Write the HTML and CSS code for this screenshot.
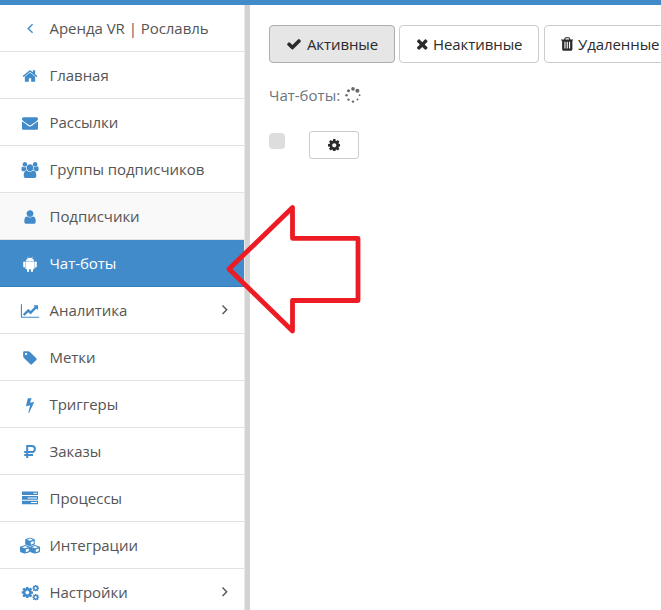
FILE: index.html
```html
<!DOCTYPE html>
<html lang="ru">
<head>
<meta charset="utf-8">
<title>Чат-боты</title>
<link rel="stylesheet" href="styles.css">
</head>
<body>
<svg class="defs" aria-hidden="true">
<symbol id="cog" viewBox="128 128 1536 1536"><path d="M1152 896q0-106-75-181t-181-75-181 75-75 181 75 181 181 75 181-75 75-181zm512-109v222q0 12-8 23t-20 13l-185 28q-19 54-39 91 35 50 107 138 10 12 10 25t-9 23q-27 37-99 108t-94 71q-12 0-26-9l-138-108q-44 23-91 38-16 136-29 186-7 28-36 28h-222q-14 0-24.500-8.500t-11.500-21.500l-28-184q-49-16-90-37l-141 107q-10 9-25 9-14 0-25-11-126-114-165-168-7-10-7-23 0-12 8-23 15-21 51-66.500t54-70.500q-27-50-41-99l-183-27q-13-2-21-12.500t-8-23.500v-222q0-12 8-23t19-13l186-28q14-46 39-92-40-57-107-138-10-12-10-24 0-10 9-23 26-36 98.500-107.500t94.500-71.500q13 0 26 10l138 107q44-23 91-38 16-136 29-186 7-28 36-28h222q14 0 24.500 8.500t11.500 21.500l28 184q49 16 90 37l142-107q9-9 24-9 13 0 25 10 129 119 165 170 7 8 7 22 0 12-8 23-15 21-51 66.500t-54 70.500q26 50 41 98l183 28q13 2 21 12.500t8 23.500z"/></symbol>
<symbol id="cube" viewBox="0 0 10 10" preserveAspectRatio="none"><path fill-rule="evenodd" d="M5 0 9.300 1.700Q10 2 10 2.700V7.300Q10 7.900 9.400 8.200L5 10 .6 8.200Q0 7.900 0 7.300V2.700Q0 2 .7 1.700ZM5 1.200 1.900 2.500 5 3.800 8.100 2.500ZM5.800 5.300V8.300L8.800 7V4.100Z"/></symbol>
</svg>
<div class="topbar"></div>
<div class="layout">
<nav class="sidebar">
<a class="item"><svg class="icon" viewBox="0 0 20 16"><path class="line" d="M12.600 3.200 8.200 7.500l4.400 4.300"/></svg><span>Аренда VR | Рославль</span></a>
<a class="item"><svg class="icon" viewBox="-224 0 2240 1792"><path d="M1472 992v480q0 26-19 45t-45 19h-384v-384h-256v384h-384q-26 0-45-19t-19-45v-480q0-1 .5-3t.5-3l575-474 575 474q1 2 1 6zm223-69l-62 74q-8 9-21 11h-3q-13 0-21-7l-692-577-692 577q-12 8-24 7-13-2-21-11l-62-74q-8-10-7-23.500t11-21.500l719-599q32-26 76-26t76 26l244 204v-195q0-14 9-23t23-9h192q14 0 23 9t9 23v408l219 182q10 8 11 21.500t-7 23.500z"/></svg><span>Главная</span></a>
<a class="item"><svg class="icon" viewBox="-224 0 2240 1792"><path d="M1792 710v794q0 66-47 113t-113 47h-1472q-66 0-113-47t-47-113v-794q44 49 101 87 362 246 497 345 57 42 92.500 65.500t94.500 48 110 24.500h2q51 0 110-24.500t94.500-48 92.500-65.500q170-123 498-345 57-39 100-87zm0-294q0 79-49 151t-122 123q-376 261-468 325-10 7-42.500 31t-54 38.500-52 32.500-57.500 27-50 9h-2q-23 0-50-9t-57.500-27-52-32.500-54-38.500-42.500-31q-91-64-262-182.500t-205-142.500q-62-42-117-115.500t-55-136.500q0-78 41.500-130t118.500-52h1472q65 0 112.500 47t47.500 113z"/></svg><span>Рассылки</span></a>
<a class="item"><svg class="icon" viewBox="-96 0 2240 1792"><path d="M657 896q-162 5-265 128h-134q-82 0-138-40.500t-56-118.500q0-353 124-353 6 0 43.500 21t97.500 42.500 119 21.500q67 0 133-23-5 37-5 66 0 159 90 306zm1071 637q0 120-73 189.500t-194 69.500h-874q-121 0-194-69.500t-73-189.500q0-53 3.500-103.500t14-109 26.500-108.500 43-97.500 62-81 85.500-53.500 111.500-20q10 0 43 21.500t73 48 107 48 135 21.500 135-21.500 107-48 73-48 43-21.500q61 0 111.500 20t85.500 53.500 62 81 43 97.500 26.500 108.500 14 109 3.500 103.500zm-1024-1277q0 106-75 181t-181 75-181-75-75-181 75-181 181-75 181 75 75 181zm704 384q0 159-112.500 271.500t-271.500 112.500-271.500-112.500-112.500-271.500 112.500-271.500 271.500-112.500 271.500 112.500 112.500 271.500zm576 225q0 78-56 118.500t-138 40.500h-134q-103-123-265-128 90-147 90-306 0-29-5-66 66 23 133 23 59 0 119-21.500t97.500-42.500 43.500-21q124 0 124 353zm-128-609q0 106-75 181t-181 75-181-75-75-181 75-181 181-75 181 75 75 181z"/></svg><span>Группы подписчиков</span></a>
<a class="item hover"><svg class="icon" viewBox="-224 0 2240 1792"><path d="M1536 1399q0 109-62.500 187t-150.500 78h-854q-88 0-150.500-78t-62.500-187q0-85 8.500-160.500t31.500-152 58.500-131 94-89 134.500-34.500q131 128 313 128t313-128q76 0 134.500 34.500t94 89 58.500 131 31.500 152 8.500 160.500zm-256-887q0 159-112.500 271.500t-271.500 112.500-271.500-112.500-112.500-271.500 112.500-271.500 271.500-112.500 271.500 112.500 112.500 271.500z"/></svg><span>Подписчики</span></a>
<a class="item active"><svg class="icon" viewBox="0 0 20 16"><path fill-rule="evenodd" d="M5.800 5.500Q6 3.300 8 2.300L7.200.9l.3-.2.900 1.400Q10 1.500 11.600 2.100l.9-1.400.3.200L12 2.300q2 1 2.200 3.200ZM8.100 3.600a.4.400 0 1 0 0 .8.400.4 0 0 0 0-.8Zm3.800 0a.4.400 0 1 0 0 .8.400.4 0 0 0 0-.8Z"/><path d="M5.500 5.800h9v6.400q0 1-1 1h-.5V15a1 1 0 0 1-2.100 0v-1.800H9.100V15a1 1 0 0 1-2.100 0v-1.800h-.5q-1 0-1-1Z"/><rect x="3.200" y="5.500" width="2.100" height="5.900" rx="1"/><rect x="14.700" y="5.500" width="2.100" height="5.900" rx="1"/></svg><span>Чат-боты</span></a>
<a class="item"><svg class="icon" viewBox="-96 0 2240 1792"><path d="M2048 1536v128h-2048v-1536h128v1408h1920zm-128-1248v435q0 21-19.500 29.500t-35.500-7.500l-121-121-633 633q-10 10-23 10t-23-10l-233-233-416 416-192-192 585-585q10-10 23-10t23 10l233 233 464-464-121-121q-16-16-7.500-35.500t29.500-19.500h435q14 0 23 9t9 23z"/></svg><span>Аналитика</span><svg class="chevron" viewBox="0 0 8 12"><path class="line" d="M1.500 1.500 5.700 5.700l-4.200 4.200"/></svg></a>
<a class="item"><svg class="icon" viewBox="-224 0 2240 1792"><path d="M576 448q0-53-37.500-90.500t-90.500-37.500-90.500 37.500-37.500 90.500 37.500 90.500 90.500 37.500 90.500-37.500 37.500-90.500zm1067 576q0 53-37 90l-491 492q-39 37-91 37-53 0-90-37l-715-716q-38-37-64.500-101t-26.500-117v-416q0-52 38-90t90-38h416q53 0 117 26.500t102 64.500l715 714q37 39 37 91z"/></svg><span>Метки</span></a>
<a class="item"><svg class="icon" viewBox="-224 0 2240 1792"><path d="M1333 566q18 20 7 44l-540 1157q-13 25-42 25-4 0-14-2-17-5-25.500-19t-4.500-30l197-808-406 101q-4 1-12 1-18 0-31-11-18-15-13-39l201-825q4-14 16-23t28-9h328q19 0 32 12.500t13 29.500q0 8-5 18l-171 463 396-98q8-2 12-2 19 0 34 15z"/></svg><span>Триггеры</span></a>
<a class="item"><svg class="icon" viewBox="0 0 20 16"><path class="thick" d="M7.200 14V1.900h4.600a3.100 3.100 0 0 1 0 6.200H4.200M4.200 11h8.800"/></svg><span>Заказы</span></a>
<a class="item"><svg class="icon" viewBox="0 0 20 16"><path fill-rule="evenodd" d="M2 .5h16v3.600H2ZM13.500 1.800v1H17v-1ZM2 5.100h16v3.600H2ZM7.700 6.400v1H17v-1ZM2 9.700h16v3.600H2ZM11 11v1h6v-1Z"/></svg><span>Процессы</span></a>
<a class="item"><svg class="icon" viewBox="0 0 20 16"><use href="#cube" x="5.100" y="-.5" width="9.800" height="8.700"/><use href="#cube" x="0" y="7" width="10" height="8.700"/><use href="#cube" x="10" y="7" width="10" height="8.700"/></svg><span>Интеграции</span></a>
<a class="item"><svg class="icon" viewBox="0 0 20 16"><use href="#cog" x="1.500" y="1.700" width="11.600" height="11.600"/><use href="#cog" x="12.300" y="-.2" width="6.800" height="6.800"/><use href="#cog" x="12.300" y="8.800" width="6.800" height="6.800"/></svg><span>Настройки</span><svg class="chevron" viewBox="0 0 8 12"><path class="line" d="M1.500 1.500 5.700 5.700l-4.200 4.200"/></svg></a>
</nav>
<main class="content">
<div class="filters">
<button class="btn pressed"><svg viewBox="0 0 1792 1792"><path d="M1671 566q0 40-28 68l-724 724-136 136q-28 28-68 28t-68-28l-136-136-362-362q-28-28-28-68t28-68l136-136q28-28 68-28t68 28l294 295 656-657q28-28 68-28t68 28l136 136q28 28 28 68z"/></svg><span>Активные</span></button>
<button class="btn inactive"><svg class="narrow" viewBox="192 0 1408 1792"><path d="M1490 1322q0 40-28 68l-136 136q-28 28-68 28t-68-28l-294-294-294 294q-28 28-68 28t-68-28l-136-136q-28-28-28-68t28-68l294-294-294-294q-28-28-28-68t28-68l136-136q28-28 68-28t68 28l294 294 294-294q28-28 68-28t68 28l136 136q28 28 28 68t-28 68l-294 294 294 294q28 28 28 68z"/></svg><span>Неактивные</span></button>
<button class="btn deleted"><svg class="narrow" viewBox="192 0 1408 1792"><path d="M704 1376v-704q0-14-9-23t-23-9h-64q-14 0-23 9t-9 23v704q0 14 9 23t23 9h64q14 0 23-9t9-23zm256 0v-704q0-14-9-23t-23-9h-64q-14 0-23 9t-9 23v704q0 14 9 23t23 9h64q14 0 23-9t9-23zm256 0v-704q0-14-9-23t-23-9h-64q-14 0-23 9t-9 23v704q0 14 9 23t23 9h64q14 0 23-9t9-23zm-544-992h448l-48-117q-7-9-17-11h-317q-10 2-17 11zm928 32v64q0 14-9 23t-23 9h-96v948q0 83-47 143.500t-113 60.500h-832q-66 0-113-58.500t-47-141.500v-952h-96q-14 0-23-9t-9-23v-64q0-14 9-23t23-9h309l70-167q15-37 54-63t79-26h320q40 0 79 26t54 63l70 167h309q14 0 23 9t9 23z"/></svg><span>Удаленные</span></button>
</div>
<div class="summary"><span>Чат-боты:</span><svg viewBox="0 0 16 16"><circle cx="8" cy="1.900" r="1.800"/><circle cx="12.400" cy="3.700" r="2"/><circle cx="14.600" cy="8.200" r=".9"/><circle cx="12.500" cy="12.600" r="1"/><circle cx="8" cy="14.600" r="1.200"/><circle cx="3.500" cy="12.600" r="1.200"/><circle cx="1.500" cy="8.200" r="1.200"/><circle cx="3.500" cy="3.700" r="1.500"/></svg></div>
<div class="tools"><span class="check"></span><button class="btn small"><svg><use href="#cog"/></svg></button></div>
</main>
</div>
<svg class="arrow" viewBox="0 0 140 132"><path d="M4 67 67.500 5.500V36.300H133V98.500H67.500V129Z"/></svg>
</body>
</html>
```
FILE: styles.css
```css
* { box-sizing: border-box; }
body { margin: 0; height: 610px; overflow: hidden; background: #fff; font: 15px/20px "Open Sans", "Noto Sans", sans-serif; color: #555; }
.defs { display: none; }
.topbar { height: 5px; background: #428bca; }
.layout { display: flex; height: 605px; }
.sidebar { flex: 0 0 250px; border-right: 5px solid #d3d3d3; box-shadow: inset -1px 0 #e8e8e8; overflow: hidden; }
.item { display: flex; align-items: center; width: 244px; height: 47px; padding: 0 15px 0 20px; border-bottom: 1px solid #e2e2e2; }
.item span { margin-left: 9.5px; letter-spacing: -0.04px; white-space: nowrap; }
.icon { flex: none; width: 20px; height: 16px; margin-top: 1px; fill: #428bca; color: #428bca; overflow: visible; }
.line { fill: none; stroke: currentColor; stroke-width: 1.4; }
.thick { fill: none; stroke: currentColor; stroke-width: 2; }
.chevron { width: 8px; height: 12px; margin-left: auto; }
.hover { background: #f9f9f9; }
.active { background: #428bca; border-color: #357ebd; color: #fff; }
.active .icon { fill: #fff; }
.content { flex: 1; min-width: 0; padding: 20px 0 0 19px; }
.filters { display: flex; }
.btn { display: flex; flex: none; align-items: center; justify-content: center; gap: 5px; width: 126px; height: 38px; padding: 0; border: 1px solid #ccc; border-radius: 4px; background: #fff; color: #2b2b2b; font: inherit; letter-spacing: -0.08px; white-space: nowrap; }
.btn svg { flex: none; width: 16px; height: 16px; fill: currentColor; }
.btn .narrow { width: 12.5px; }
.pressed { background: #e6e6e6; border-color: #adadad; }
.inactive { width: 140px; margin: 0 5px 0 4px; }
.deleted { width: 132px; }
.summary { display: flex; align-items: center; gap: 5px; height: 20px; margin-top: 22px; color: #6c757d; }
.summary svg { width: 16px; height: 16px; fill: #666; }
.tools { display: flex; align-items: flex-start; gap: 24px; margin-top: 26px; }
.check { width: 16px; height: 16px; margin-top: 2px; border-radius: 4px; background: #ddd; }
.small { width: 50px; height: 28px; border-radius: 3px; }
.btn.small svg { width: 12.5px; height: 12.5px; }
.arrow { position: absolute; left: 225px; top: 202px; width: 140px; height: 132px; fill: none; stroke: #ed1c24; stroke-width: 4.8; stroke-linejoin: round; }
```
